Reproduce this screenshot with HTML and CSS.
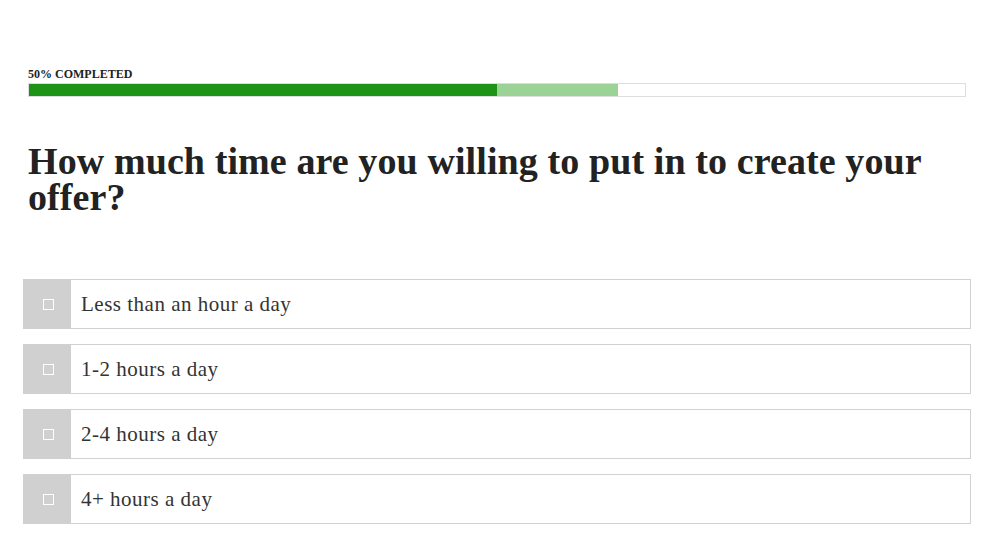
FILE: index.html
```html
<!DOCTYPE html>
<html lang="en">
<head>
<meta charset="utf-8">
<title>Quiz</title>
<link rel="stylesheet" href="styles.css">
</head>
<body>
<main class="quiz">
  <section class="progress">
    <div class="progress-label">50% COMPLETED</div>
    <div class="progress-track">
      <div class="progress-done"></div>
      <div class="progress-next"></div>
    </div>
  </section>
  <h1 class="question">How much time are you willing to put in to create your offer?</h1>
  <ul class="options">
    <li class="option"><span class="check"><span class="box"></span></span><span class="label">Less than an hour a day</span></li>
    <li class="option"><span class="check"><span class="box"></span></span><span class="label">1-2 hours a day</span></li>
    <li class="option"><span class="check"><span class="box"></span></span><span class="label">2-4 hours a day</span></li>
    <li class="option"><span class="check"><span class="box"></span></span><span class="label">4+ hours a day</span></li>
  </ul>
</main>
</body>
</html>
```
FILE: styles.css
```css
* { box-sizing: border-box; }
html, body { margin: 0; padding: 0; background: #fff; }
body {
  font-family: "Liberation Serif", "Times New Roman", serif;
  color: #262626;
}
.quiz {
  padding: 68px 25px 0 23px;
  display: flex;
  flex-direction: column;
}
.progress {
  padding: 0 5px;
  display: flex;
  flex-direction: column;
  gap: 2px;
}
.progress-label {
  font-size: 12px;
  font-weight: bold;
  line-height: 13px;
  letter-spacing: 0;
  color: #222;
}
.progress-track {
  height: 14px;
  border: 1px solid #dedede;
  display: flex;
}
.progress-done { width: 468px; background: #1e9416; }
.progress-next { width: 121px; background: #9bd396; }
.question {
  margin: 46px 0 0;
  padding: 0 5px;
  font-size: 38px;
  line-height: 36px;
  font-weight: bold;
  color: #222;
  letter-spacing: 0.1px;
}
.options {
  list-style: none;
  margin: 64px 0 0;
  padding: 0;
  display: flex;
  flex-direction: column;
  gap: 15px;
}
.option {
  height: 50px;
  border: 1px solid #d2d2d2;
  display: flex;
  align-items: stretch;
}
.check {
  width: 48px;
  margin: -1px 0 -1px -1px;
  background: #d0d0d0;
  display: flex;
  align-items: center;
  justify-content: center;
}
.box {
  width: 11px;
  height: 11px;
  border: 1px solid #fff;
  margin-left: 2px;
}
.label {
  padding-left: 10px;
  display: flex;
  align-items: center;
  font-size: 21px;
  letter-spacing: 0.5px;
  color: #333;
}
```
